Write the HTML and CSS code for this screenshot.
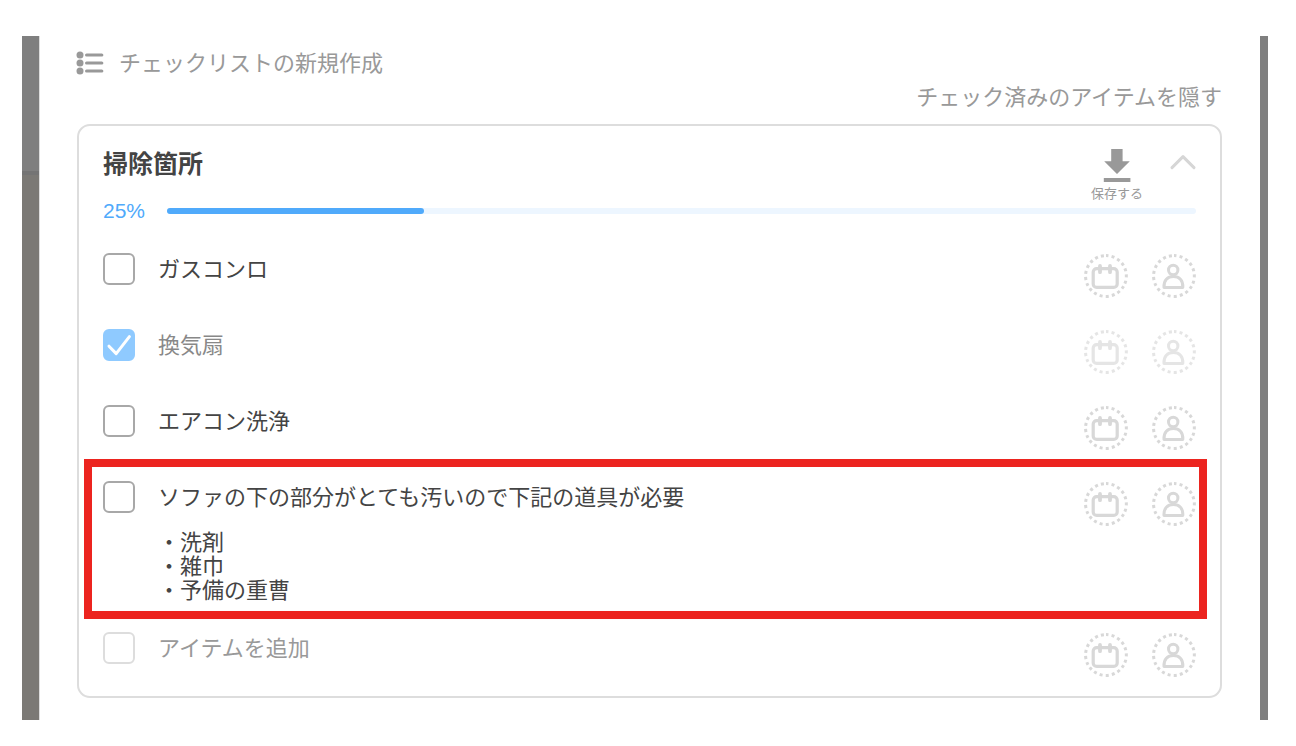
FILE: index.html
```html
<!DOCTYPE html>
<html lang="ja">
<head>
    <meta charset="UTF-8">
    <meta name="viewport" content="width=device-width, initial-scale=1.0">
    <title>チェックリスト</title>
    <link rel="stylesheet" href="styles.css">
</head>
<body>
    <!-- Shared icons -->
    <svg class="icon-defs" aria-hidden="true">
        <symbol id="icon-calendar" viewBox="0 0 44 44">
            <path d="M22 1.6A20.4 20.4 0 1 1 21.9 1.6" fill="none" stroke="currentColor" stroke-width="3" stroke-dasharray="3 3.15" stroke-dashoffset="0.5"/>
            <rect x="9.2" y="14.6" width="24" height="18.8" rx="3.5" fill="none" stroke="currentColor" stroke-width="3.2"/>
            <path d="M16 12v6.2M26 12v6.2" stroke="currentColor" stroke-width="3.8" stroke-linecap="round"/>
        </symbol>
        <symbol id="icon-person" viewBox="0 0 44 44">
            <path d="M22 1.6A20.4 20.4 0 1 1 21.9 1.6" fill="none" stroke="currentColor" stroke-width="3" stroke-dasharray="3 3.15" stroke-dashoffset="0.5"/>
            <circle cx="21.2" cy="16" r="4.7" fill="none" stroke="currentColor" stroke-width="3"/>
            <path d="M12 33.4C11.6 26 15.6 22.6 21.4 22.6S31.2 26 30.8 33.4Z" fill="none" stroke="currentColor" stroke-width="3" stroke-linejoin="round"/>
        </symbol>
    </svg>

    <div class="window">
        <main class="panel">
            <button class="new-list" type="button">
                <svg width="28" height="28" viewBox="0 0 28 28" fill="#999" aria-hidden="true">
                    <circle cx="3" cy="8" r="3.5"/>
                    <circle cx="3" cy="16" r="3.5"/>
                    <circle cx="3" cy="24" r="3.5"/>
                    <path d="M9.6 8h15.2M9.6 16h15.2M9.6 24h15.2" stroke="#999" stroke-width="3.2" stroke-linecap="round"/>
                </svg>
                <span>チェックリストの新規作成</span>
            </button>
            <button class="hide-checked" type="button">チェック済みのアイテムを隠す</button>

            <section class="card">
                <header class="card-header">
                    <h2>掃除箇所</h2>
                    <div class="card-tools">
                        <button class="save" type="button">
                            <svg width="28" height="34" viewBox="0 0 28 34" fill="#999" aria-hidden="true">
                                <path d="M8.2 0h11.4v12.2h7.2L14 25 1.2 12.2h7z"/>
                                <path d="M.8 29h26.6v4H.8z"/>
                            </svg>
                            <span>保存する</span>
                        </button>
                        <button class="collapse" type="button" aria-label="閉じる">
                            <svg width="26" height="16" viewBox="0 0 26 16" fill="none" aria-hidden="true">
                                <path d="M2 13.6L13 2.6l11 11" stroke="#d6d6d6" stroke-width="3" stroke-linecap="round" stroke-linejoin="round"/>
                            </svg>
                        </button>
                    </div>
                </header>

                <div class="progress">
                    <span class="progress-value">25%</span>
                    <div class="progress-track" role="progressbar" aria-valuenow="25" aria-valuemin="0" aria-valuemax="100" aria-label="進捗">
                        <div class="progress-bar" style="width: 25%"></div>
                    </div>
                </div>

                <ul class="items">
                    <li class="item">
                        <span class="check"><input type="checkbox" id="item-1"></span>
                        <label for="item-1">ガスコンロ</label>
                        <div class="actions">
                            <button type="button" aria-label="期限"><svg><use href="#icon-calendar"/></svg></button>
                            <button type="button" aria-label="担当者"><svg><use href="#icon-person"/></svg></button>
                        </div>
                    </li>
                    <li class="item item-done">
                        <span class="check">
                            <input type="checkbox" id="item-2" checked>
                            <svg class="tick" viewBox="0 0 32 32" fill="none" aria-hidden="true">
                                <path d="M6 17.2l7.2 7.4L26.4 7.6" stroke="#fff" stroke-width="3" stroke-linecap="round" stroke-linejoin="round"/>
                            </svg>
                        </span>
                        <label for="item-2">換気扇</label>
                        <div class="actions">
                            <button type="button" aria-label="期限"><svg><use href="#icon-calendar"/></svg></button>
                            <button type="button" aria-label="担当者"><svg><use href="#icon-person"/></svg></button>
                        </div>
                    </li>
                    <li class="item">
                        <span class="check"><input type="checkbox" id="item-3"></span>
                        <label for="item-3">エアコン洗浄</label>
                        <div class="actions">
                            <button type="button" aria-label="期限"><svg><use href="#icon-calendar"/></svg></button>
                            <button type="button" aria-label="担当者"><svg><use href="#icon-person"/></svg></button>
                        </div>
                    </li>
                    <li class="item item-marked">
                        <span class="check"><input type="checkbox" id="item-4"></span>
                        <div class="item-text">
                            <label for="item-4">ソファの下の部分がとても汚いので下記の道具が必要</label>
                            <p class="note">・洗剤<br>・雑巾<br>・予備の重曹</p>
                        </div>
                        <div class="actions">
                            <button type="button" aria-label="期限"><svg><use href="#icon-calendar"/></svg></button>
                            <button type="button" aria-label="担当者"><svg><use href="#icon-person"/></svg></button>
                        </div>
                    </li>
                    <li class="item item-new">
                        <span class="check"><input type="checkbox" aria-label="新しいアイテム" disabled></span>
                        <input class="new-item" type="text" placeholder="アイテムを追加" aria-label="アイテムを追加">
                        <div class="actions">
                            <button type="button" aria-label="期限"><svg><use href="#icon-calendar"/></svg></button>
                            <button type="button" aria-label="担当者"><svg><use href="#icon-person"/></svg></button>
                        </div>
                    </li>
                </ul>
            </section>
        </main>
    </div>
</body>
</html>
```

FILE: styles.css
```css
* {
    box-sizing: border-box;
}
body {
    margin: 0;
    padding: 36px 28px 26px 22px;
    min-height: 100vh;
    display: flex;
    background: #fff;
    color: #444;
    font-family: "Noto Sans CJK JP", sans-serif;
    font-size: 22px;
    line-height: 28px;
}
button {
    border: 0;
    padding: 0;
    background: none;
    color: #999;
    font: inherit;
    cursor: pointer;
}
svg {
    display: block;
    overflow: visible;
}
.icon-defs {
    position: absolute;
    width: 0;
    height: 0;
}

/* Dimmed page behind the panel */
.window {
    flex: 1;
    display: flex;
    padding: 0 8px 0 17px;
    background: linear-gradient(#7f7f7f 135px, #747474 135px, #747474 139px, #7b7975 139px) left / 17px 100% no-repeat, #7f7f7f;
}
.panel {
    flex: 1;
    display: flex;
    flex-direction: column;
    padding: 11px 38px 22px 37px;
    border-left: 1px solid #ddd;
    background: #fff;
}
.new-list {
    align-self: flex-start;
    display: flex;
    align-items: center;
    gap: 14px;
}
.hide-checked {
    align-self: flex-end;
    margin-top: 6px;
}

/* Checklist card */
.card {
    margin-top: 15px;
    padding: 19px 24px;
    border: 2px solid #ddd;
    border-radius: 13px;
}
.card-header {
    display: flex;
    justify-content: space-between;
    align-items: flex-start;
    height: 56px;
}
.card-header h2 {
    margin: 0;
    font-size: 25px;
    font-weight: 700;
    line-height: 34px;
}
.card-tools {
    display: flex;
    align-items: flex-start;
    gap: 27px;
    padding-top: 4px;
}
.save {
    display: flex;
    flex-direction: column;
    align-items: center;
    gap: 1px;
    font-size: 13px;
    line-height: 18px;
}
.collapse {
    padding-top: 5px;
}
.progress {
    display: flex;
    align-items: center;
    gap: 22px;
    height: 20px;
}
.progress-value {
    color: #50aafb;
    font-family: "Liberation Sans", Arial, sans-serif;
    font-size: 21px;
}
.progress-track {
    flex: 1;
    height: 6px;
    border-radius: 3px;
    background: #edf6ff;
}
.progress-bar {
    height: 100%;
    border-radius: 3px;
    background: #50aafb;
}

/* Items */
.items {
    margin: 32px 0 0;
    padding: 0;
    list-style: none;
}
.item {
    position: relative;
    display: flex;
    align-items: flex-start;
    gap: 23px;
    padding-bottom: 31px;
}
.item:last-child {
    padding-bottom: 0;
}
.item > label,
.item-text,
.new-item {
    flex: 1;
}
.item-text label {
    display: block;
}
.check {
    position: relative;
    width: 32px;
    height: 32px;
}
.check input {
    display: block;
    appearance: none;
    width: 32px;
    height: 32px;
    margin: 0;
    border: 2px solid #a8a8a8;
    border-radius: 6px;
    background: #fff;
}
.check input:checked {
    border-color: #8fcaff;
    background: #8fcaff;
}
.check input:disabled {
    border-color: #ddd;
}
.tick {
    position: absolute;
    inset: 0;
    pointer-events: none;
}
.actions {
    display: flex;
    gap: 24px;
    padding-top: 1px;
}
.actions button {
    color: #d8d8d8;
}
.actions svg {
    width: 44px;
    height: 44px;
}
.item-done label {
    color: #888;
}
.item-done .actions {
    opacity: 0.65;
}
.note {
    margin: 19px 0 1px;
    line-height: 24px;
}
.item-marked::after {
    content: "";
    position: absolute;
    inset: -22px -11px 13px -19px;
    border: 8px solid #ec241f;
    pointer-events: none;
}
.new-item {
    height: 28px;
    padding: 0;
    border: 0;
    background: none;
    font: inherit;
}
.new-item::placeholder {
    color: #999;
    opacity: 1;
}
```
